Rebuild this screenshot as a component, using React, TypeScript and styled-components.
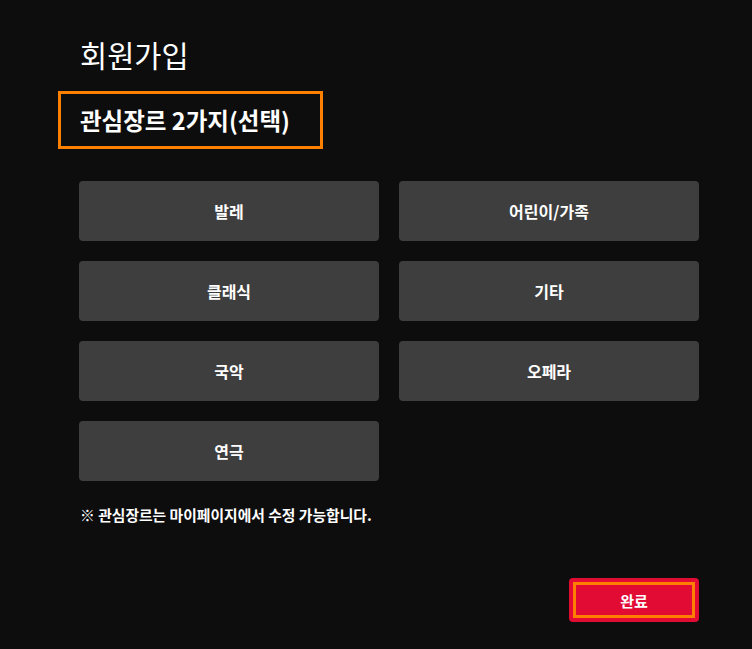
import React from "react";
import styled, { createGlobalStyle } from "styled-components";

const Global = createGlobalStyle`
  html, body { margin: 0; padding: 0; background: #0d0d0d; }
  body { font-family: "Noto Sans CJK KR", "Noto Sans", sans-serif; color: #fff; }
`;

const Page = styled.div`
  width: 752px;
  height: 649px;
  box-sizing: border-box;
  padding: 34px 53px 0 79px;
  display: flex;
  flex-direction: column;
`;

const Title = styled.h1`
  margin: 0 0 0 1px;
  font-size: 29.5px;
  font-weight: 400;
  line-height: 40px;
`;

const SubBox = styled.div`
  margin: 17px 0 0 -21px;
  width: 265px;
  height: 58px;
  box-sizing: border-box;
  border: 3px solid #ff7f00;
  padding-left: 19px;
  display: flex;
  align-items: center;
`;

const SubTitle = styled.h2`
  margin: 0;
  font-size: 23.5px;
  font-weight: 700;
`;

const Grid = styled.div`
  margin-top: 32px;
  display: grid;
  grid-template-columns: 300px 300px;
  grid-auto-rows: 60px;
  gap: 20px;
`;

const Genre = styled.button`
  border: none;
  border-radius: 4px;
  background: #3e3e3e;
  color: #fff;
  font-family: inherit;
  font-size: 16px;
  font-weight: 700;
  padding: 0;
  cursor: pointer;
`;

const Note = styled.p`
  margin: 23px 0 0 1px;
  font-size: 14.8px;
  font-weight: 700;
  line-height: 22px;
`;

const Footer = styled.div`
  margin-top: 52px;
  display: flex;
  justify-content: flex-end;
`;

const Done = styled.button`
  width: 130px;
  height: 44px;
  border: none;
  border-radius: 4px;
  background: #e10b33;
  color: #fff;
  font-family: inherit;
  font-size: 15px;
  font-weight: 700;
  padding: 0;
  outline: 3px solid #ff7f00;
  outline-offset: -7px;
  cursor: pointer;
`;

const genres = ["발레", "어린이/가족", "클래식", "기타", "국악", "오페라", "연극"];

export default function App() {
  return (
    <>
      <Global />
      <Page>
        <Title>회원가입</Title>
        <SubBox>
          <SubTitle>관심장르 2가지(선택)</SubTitle>
        </SubBox>
        <Grid>
          {genres.map((g) => (
            <Genre key={g}>{g}</Genre>
          ))}
        </Grid>
        <Note>※ 관심장르는 마이페이지에서 수정 가능합니다.</Note>
        <Footer>
          <Done>완료</Done>
        </Footer>
      </Page>
    </>
  );
}
